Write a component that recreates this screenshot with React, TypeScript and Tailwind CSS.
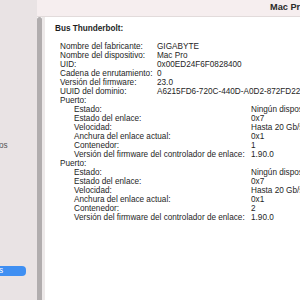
import React from "react";

const lvl1: [string, string][] = [
  ["Nombre del fabricante:", "GIGABYTE"],
  ["Nombre del dispositivo:", "Mac Pro"],
  ["UID:", "0x00ED24F6F0828400"],
  ["Cadena de enrutamiento:", "0"],
  ["Versión del firmware:", "23.0"],
  ["UUID del dominio:", "A6215FD6-720C-440D-A0D2-872FD22E1A5C"],
];

const port = (c: string): [string, string][] => [
  ["Estado:", "Ningún dispositivo conectado"],
  ["Estado del enlace:", "0x7"],
  ["Velocidad:", "Hasta 20 Gb/s x 2"],
  ["Anchura del enlace actual:", "0x1"],
  ["Contenedor:", c],
  ["Versión del firmware del controlador de enlace:", "1.90.0"],
];

function Row({ l, v, w, indent }: { l: string; v: string; w: string; indent: string }) {
  return (
    <div className={`flex h-[9px] leading-[9px] ${indent}`}>
      <div className={`${w} shrink-0`}>{l}</div>
      <div className="shrink-0">{v}</div>
    </div>
  );
}

function Port({ c }: { c: string }) {
  return (
    <>
      <div className="h-[9px] leading-[9px] pl-[5px]">Puerto:</div>
      {port(c).map(([l, v]) => (
        <Row key={l} l={l} v={v} w="w-[177px]" indent="pl-[19px]" />
      ))}
    </>
  );
}

export default function App() {
  return (
    <div
      className="w-[300px] h-[300px] flex overflow-hidden text-[8.2px] text-[#1e1e1e] whitespace-nowrap"
      style={{ fontFamily: '"Liberation Sans", Arial, sans-serif' }}
    >
      <div className="w-[37px] shrink-0 bg-[#e9e3e4] flex flex-col overflow-hidden">
        <div className="pt-[141px] h-[150px] leading-[9px] text-[#555] -ml-[1px]">os</div>
        <div className="mt-[116px] h-[10px] w-[27px] bg-[#3f8ff2] rounded-r-[4px] text-white leading-[10px] -ml-[1px]">
          s
        </div>
      </div>
      <div className="flex-1 flex flex-col min-w-0">
        <div className="h-[17px] shrink-0 bg-[#f6eeef] border-b border-[#e2dbdb] flex items-center pl-[233px]">
          <span className="text-[9.2px] font-semibold text-[#2a2a2a]">Mac Pro</span>
        </div>
        <div className="flex flex-1 min-h-0">
          <div className="w-[5px] shrink-0 bg-[#b1adae] rounded-t-[3px]"></div>
          <div className="w-[3px] shrink-0 bg-[#ede9e9]"></div>
          <div className="flex-1 bg-white overflow-hidden pt-[7px] pl-[10px]">
            <div className="h-[9px] leading-[9px] font-bold">Bus Thunderbolt:</div>
            <div className="h-[9px]"></div>
            {lvl1.map(([l, v]) => (
              <Row key={l} l={l} v={v} w="w-[97px]" indent="pl-[5px]" />
            ))}
            <Port c="1" />
            <Port c="2" />
          </div>
        </div>
      </div>
    </div>
  );
}
